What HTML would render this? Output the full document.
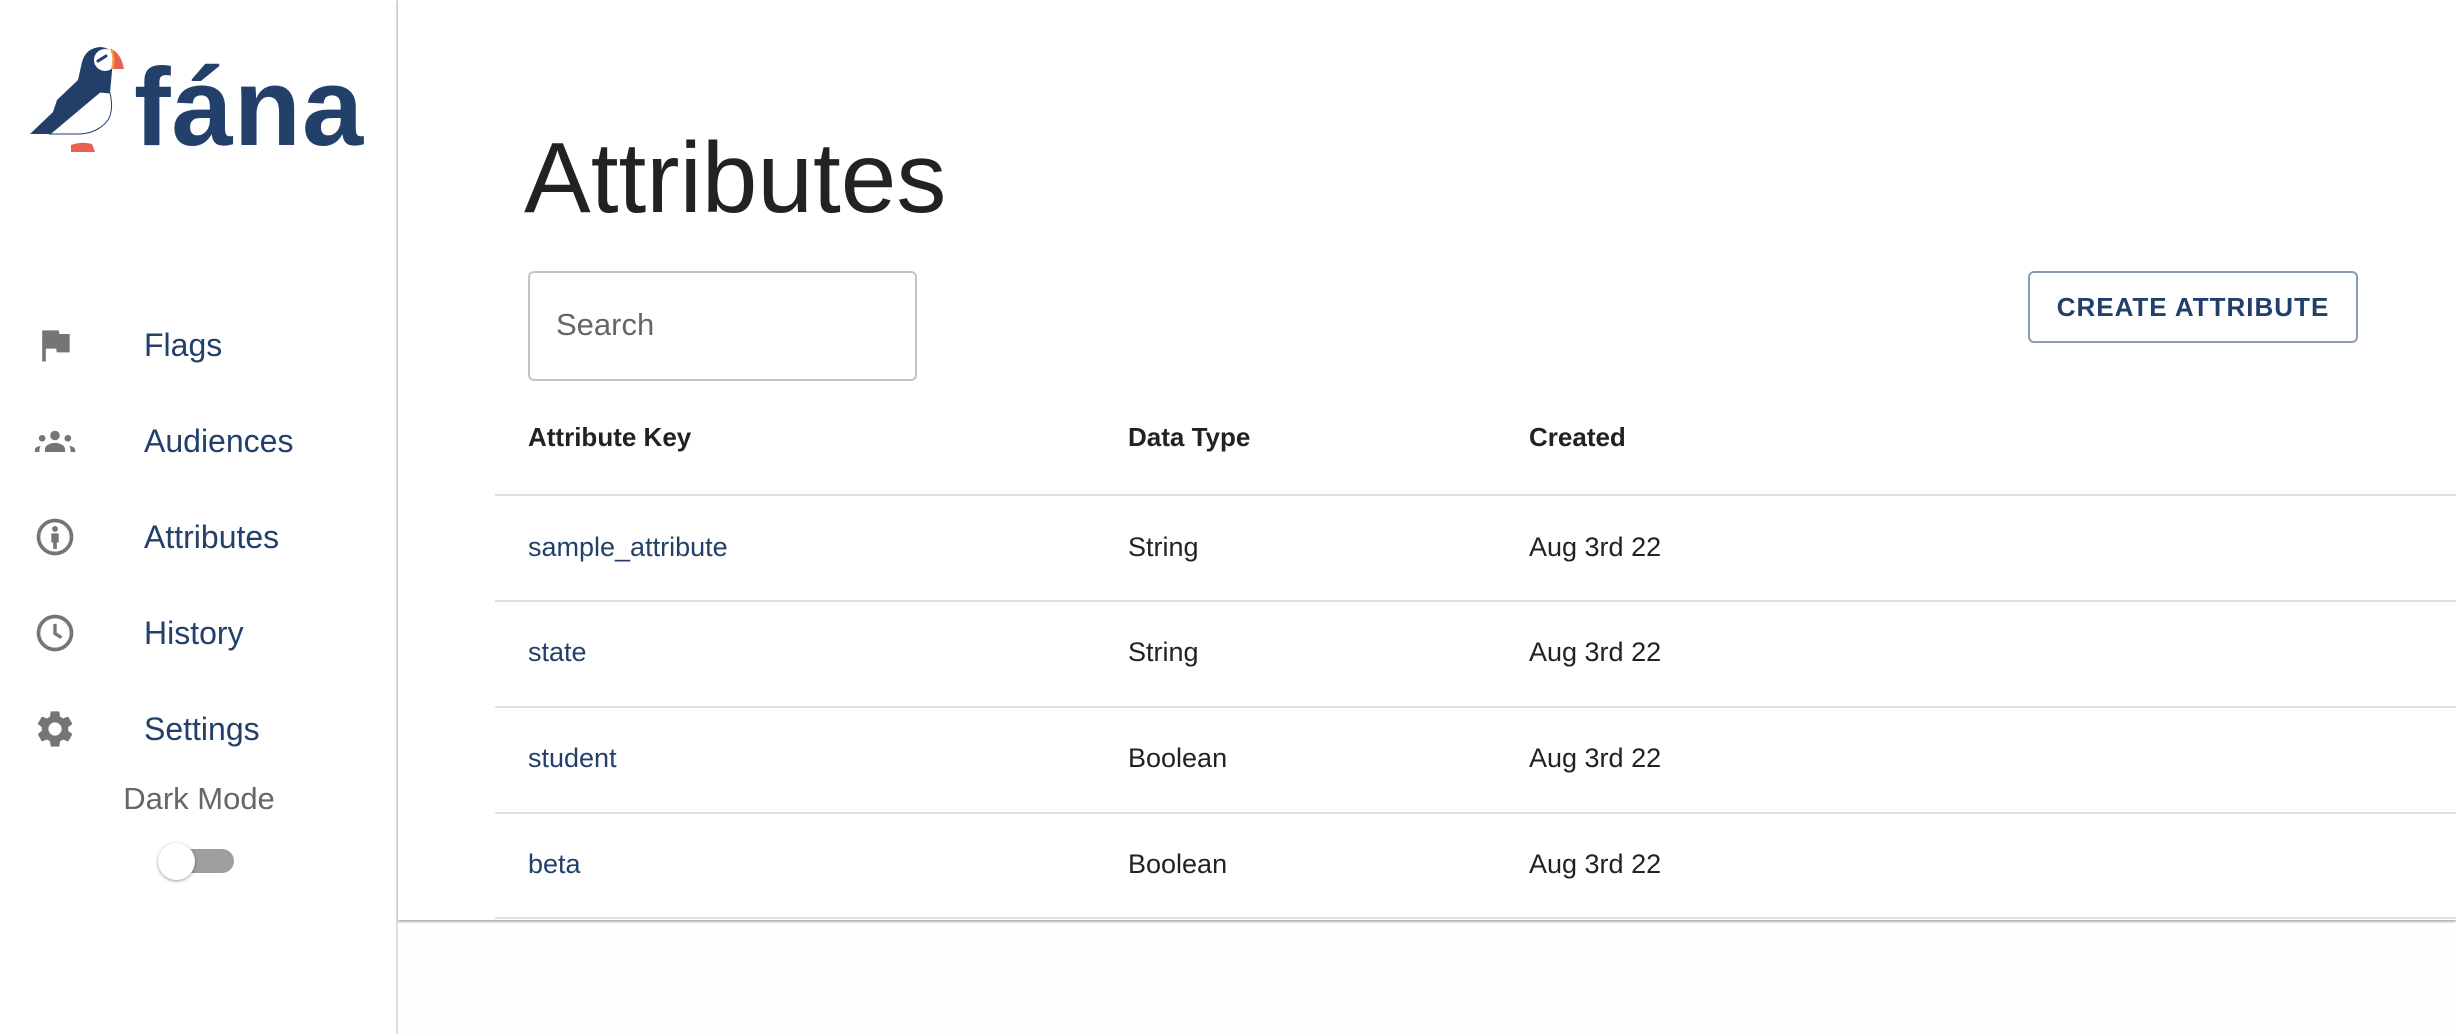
<!DOCTYPE html>
<html><head><meta charset="utf-8"><style>
*{margin:0;padding:0;box-sizing:border-box}
body{width:2456px;height:1034px;background:#fefefe;font-family:"Liberation Sans",sans-serif;position:relative;overflow:hidden}
.side{position:absolute;left:0;top:0;width:398px;height:1034px;background:#fff;border-right:2px solid #e0e0e0}
.main{position:absolute;left:398px;top:0;right:0;height:920px;background:#fff;box-shadow:0 2px 2px rgba(0,0,0,.3)}
.nav{position:absolute;left:144px;font-size:32px;color:#23406b;line-height:40px}
.ic{position:absolute;left:33px;width:44px;height:44px}
.t{position:absolute;font-size:27px;color:#222;line-height:32px}
.k{color:#23406b}
.h{font-weight:bold;font-size:26px}
.line{position:absolute;left:495px;right:0;height:2px;background:#e0e0e0}
</style></head><body>
<div class="side">
<svg style="position:absolute;left:0;top:0" width="140" height="160" viewBox="0 0 140 160">
<path d="M30 134 L53 112 L57 100 L78 80 L82 62 Q86 48 100 47 Q112 47 113 60 L110 93 Q114 110 108 120 Q98 133 80 134 Z" fill="#223f69"/>
<path d="M50 134 L100 92 L110 93 Q114 110 108 120 Q98 133 80 134 Z" fill="#fff" stroke="#223f69" stroke-width="1"/>
<circle cx="105" cy="60" r="11" fill="#fff"/>
<path d="M98 61 L106 56" stroke="#223f69" stroke-width="3" stroke-linecap="round"/>
<path d="M111 49 Q121 53 124 69 L113 69 Q116 59 111 49 Z" fill="#e8604f"/>
<path d="M111 49 Q115 58 112 69" stroke="#f2a93b" stroke-width="2" fill="none"/>
<path d="M71 152 L71 145 Q82 141 92 144 L95 152 Z" fill="#e8604f"/>
</svg>
<div style="position:absolute;left:134px;top:48px;font-size:110px;font-weight:bold;color:#22406a;line-height:120px;letter-spacing:1px">fána</div>

<svg class="ic" style="top:323px" viewBox="0 0 24 24"><path fill="#757575" d="M14.4 6L14 4H5v17h2v-7h5.6l.4 2h7V6z"/></svg>
<div class="nav" style="top:325px">Flags</div>

<svg class="ic" style="top:419px" viewBox="0 0 24 24"><g fill="#757575"><circle cx="12" cy="9" r="2.6"/><circle cx="5" cy="10.5" r="1.8"/><circle cx="19" cy="10.5" r="1.8"/><path d="M6.5 18v-1.5c0-2 2.5-3.5 5.5-3.5s5.5 1.5 5.5 3.5V18z"/><path d="M1 18v-1c0-1.3 1.3-2.2 3.3-2.3-.5.6-.8 1.3-.8 2.2V18z"/><path d="M23 18v-1c0-1.3-1.3-2.2-3.3-2.3.5.6.8 1.3.8 2.2V18z"/></g></svg>
<div class="nav" style="top:421px">Audiences</div>

<svg class="ic" style="top:515px" viewBox="0 0 24 24"><circle cx="12" cy="12" r="9" fill="none" stroke="#757575" stroke-width="2"/><circle cx="12" cy="7.6" r="1.6" fill="#757575"/><path fill="#757575" d="M10 10h4v5h-1v3.5h-2V15h-1z"/></svg>
<div class="nav" style="top:517px">Attributes</div>

<svg class="ic" style="top:611px" viewBox="0 0 24 24"><circle cx="12" cy="12" r="9" fill="none" stroke="#757575" stroke-width="2"/><path d="M12 7v5.3l3.5 2.2" fill="none" stroke="#757575" stroke-width="1.8"/></svg>
<div class="nav" style="top:613px">History</div>

<svg class="ic" style="top:707px" viewBox="0 0 24 24"><path fill="#757575" d="M19.14 12.94c.04-.3.06-.61.06-.94 0-.32-.02-.64-.07-.94l2.03-1.58a.49.49 0 00.12-.61l-1.92-3.32a.488.488 0 00-.59-.22l-2.39.96c-.5-.38-1.030-.7-1.62-.94l-.36-2.54a.484.484 0 00-.48-.41h-3.84c-.24 0-.43.17-.47.41l-.36 2.54c-.59.24-1.13.57-1.620.94l-2.39-.96c-.22-.08-.47 0-.59.22L2.74 8.87c-.12.21-.08.47.12.61l2.03 1.58c-.05.3-.07.62-.07.94s.02.64.07.94l-2.03 1.58a.49.49 0 00-.12.61l1.92 3.32c.12.22.37.29.59.22l2.39-.96c.5.38 1.03.7 1.62.94l.36 2.54c.05.24.24.41.48.41h3.84c.24 0 .44-.17.47-.41l.36-2.54c.59-.24 1.13-.56 1.62-.94l2.39.96c.22.08.47 0 .59-.22l1.92-3.32c.12-.22.07-.47-.12-.61l-2.01-1.58zM12 15.6c-1.98 0-3.6-1.62-3.6-3.6s1.620-3.6 3.6-3.6 3.6 1.62 3.6 3.6-1.62 3.6-3.6 3.6z"/></svg>
<div class="nav" style="top:709px">Settings</div>

<div style="position:absolute;left:0;width:398px;text-align:center;top:781px;font-size:31px;color:#666;line-height:36px">Dark Mode</div>
<div style="position:absolute;left:162px;top:849px;width:72px;height:24px;border-radius:12px;background:#9e9e9e"></div>
<div style="position:absolute;left:158px;top:843px;width:37px;height:37px;border-radius:50%;background:#fff;box-shadow:0 1px 3px rgba(0,0,0,.4)"></div>
</div>

<div class="main"></div>
<div style="position:absolute;left:524px;top:118px;font-size:100px;color:#222;line-height:120px">Attributes</div>
<div style="position:absolute;left:528px;top:271px;width:389px;height:110px;border:2px solid #c4c4c4;border-radius:6px"></div>
<div style="position:absolute;left:556px;top:307px;font-size:31px;color:#666;line-height:36px">Search</div>
<div style="position:absolute;left:2028px;top:271px;width:330px;height:72px;border:2px solid #8a9bb5;border-radius:6px;text-align:center;line-height:68px;font-size:26px;font-weight:bold;color:#213f6b;letter-spacing:1px">CREATE ATTRIBUTE</div>

<div class="t h" style="left:528px;top:421px">Attribute Key</div>
<div class="t h" style="left:1128px;top:421px">Data Type</div>
<div class="t h" style="left:1529px;top:421px">Created</div>
<div class="line" style="top:494px"></div>

<div class="t k" style="left:528px;top:531px">sample_attribute</div>
<div class="t" style="left:1128px;top:531px">String</div>
<div class="t" style="left:1529px;top:531px">Aug 3rd 22</div>
<div class="line" style="top:600px"></div>

<div class="t k" style="left:528px;top:636px">state</div>
<div class="t" style="left:1128px;top:636px">String</div>
<div class="t" style="left:1529px;top:636px">Aug 3rd 22</div>
<div class="line" style="top:706px"></div>

<div class="t k" style="left:528px;top:742px">student</div>
<div class="t" style="left:1128px;top:742px">Boolean</div>
<div class="t" style="left:1529px;top:742px">Aug 3rd 22</div>
<div class="line" style="top:812px"></div>

<div class="t k" style="left:528px;top:848px">beta</div>
<div class="t" style="left:1128px;top:848px">Boolean</div>
<div class="t" style="left:1529px;top:848px">Aug 3rd 22</div>
<div class="line" style="top:917px"></div>
</body></html>
